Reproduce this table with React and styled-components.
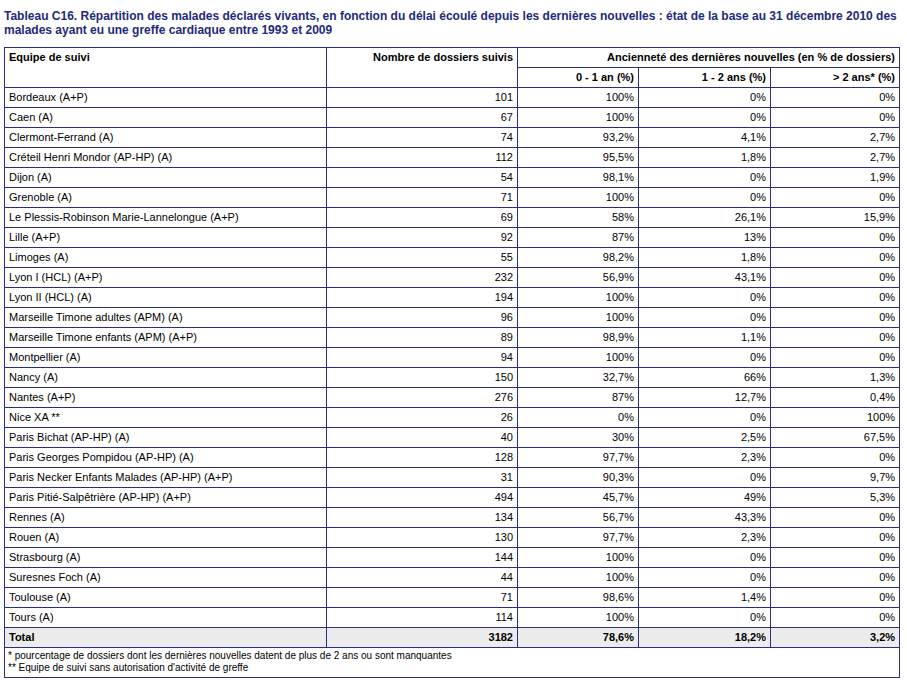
import styled, { createGlobalStyle } from "styled-components";

const rows = [
  ["Bordeaux (A+P)", "101", "100%", "0%", "0%"],
  ["Caen (A)", "67", "100%", "0%", "0%"],
  ["Clermont-Ferrand (A)", "74", "93,2%", "4,1%", "2,7%"],
  ["Créteil Henri Mondor (AP-HP) (A)", "112", "95,5%", "1,8%", "2,7%"],
  ["Dijon (A)", "54", "98,1%", "0%", "1,9%"],
  ["Grenoble (A)", "71", "100%", "0%", "0%"],
  ["Le Plessis-Robinson Marie-Lannelongue (A+P)", "69", "58%", "26,1%", "15,9%"],
  ["Lille (A+P)", "92", "87%", "13%", "0%"],
  ["Limoges (A)", "55", "98,2%", "1,8%", "0%"],
  ["Lyon I (HCL) (A+P)", "232", "56,9%", "43,1%", "0%"],
  ["Lyon II (HCL) (A)", "194", "100%", "0%", "0%"],
  ["Marseille Timone adultes (APM) (A)", "96", "100%", "0%", "0%"],
  ["Marseille Timone enfants (APM) (A+P)", "89", "98,9%", "1,1%", "0%"],
  ["Montpellier (A)", "94", "100%", "0%", "0%"],
  ["Nancy (A)", "150", "32,7%", "66%", "1,3%"],
  ["Nantes (A+P)", "276", "87%", "12,7%", "0,4%"],
  ["Nice XA **", "26", "0%", "0%", "100%"],
  ["Paris Bichat (AP-HP) (A)", "40", "30%", "2,5%", "67,5%"],
  ["Paris Georges Pompidou (AP-HP) (A)", "128", "97,7%", "2,3%", "0%"],
  ["Paris Necker Enfants Malades (AP-HP) (A+P)", "31", "90,3%", "0%", "9,7%"],
  ["Paris Pitié-Salpêtrière (AP-HP) (A+P)", "494", "45,7%", "49%", "5,3%"],
  ["Rennes (A)", "134", "56,7%", "43,3%", "0%"],
  ["Rouen (A)", "130", "97,7%", "2,3%", "0%"],
  ["Strasbourg (A)", "144", "100%", "0%", "0%"],
  ["Suresnes Foch (A)", "44", "100%", "0%", "0%"],
  ["Toulouse (A)", "71", "98,6%", "1,4%", "0%"],
  ["Tours (A)", "114", "100%", "0%", "0%"],
];

const GlobalStyle = createGlobalStyle`
  body {
    margin: 0;
    background: #fff;
    font-family: "Liberation Sans", Arial, sans-serif;
  }
`;

const Page = styled.div`
  padding: 9px 0 0 4px;
  width: 895px;
`;

const Title = styled.h1`
  margin: 0 0 10px;
  font-size: 12px;
  line-height: 14px;
  font-weight: bold;
  color: #1f2a7a;
`;

const Table = styled.table`
  border-collapse: collapse;
  width: 895px;
  table-layout: fixed;
  font-size: 11px;
  color: #000;
`;

const Cell = styled.td`
  border: 1px solid #2c2c84;
  height: 19px;
  padding: 0 4px;
  line-height: 19px;
  text-align: ${(p) => (p.$left ? "left" : "right")};
  font-weight: ${(p) => (p.$bold ? "bold" : "normal")};
  background: ${(p) => (p.$grey ? "#ececec" : "transparent")};
  vertical-align: ${(p) => (p.$top ? "top" : "middle")};
  white-space: nowrap;
`;

const Notes = styled.td`
  border: 1px solid #2c2c84;
  height: 29px;
  box-sizing: border-box;
  padding: 2px 3px 3px;
  font-size: 10px;
  line-height: 12px;
  vertical-align: top;
`;

export default function App() {
  return (
    <>
      <GlobalStyle />
      <Page>
        <Title>
          Tableau C16. Répartition des malades déclarés vivants, en fonction du délai écoulé depuis les dernières
          nouvelles : état de la base au 31 décembre 2010 des malades ayant eu une greffe cardiaque entre 1993 et 2009
        </Title>
        <Table>
          <colgroup>
            <col style={{ width: 322 }} />
            <col style={{ width: 191 }} />
            <col style={{ width: 121 }} />
            <col style={{ width: 132 }} />
            <col style={{ width: 129 }} />
          </colgroup>
          <thead>
            <tr>
              <Cell as="th" $left $bold $top rowSpan={2}>Equipe de suivi</Cell>
              <Cell as="th" $bold $top rowSpan={2}>Nombre de dossiers suivis</Cell>
              <Cell as="th" $bold colSpan={3}>Ancienneté des dernières nouvelles (en % de dossiers)</Cell>
            </tr>
            <tr>
              <Cell as="th" $bold>0 - 1 an (%)</Cell>
              <Cell as="th" $bold>1 - 2 ans (%)</Cell>
              <Cell as="th" $bold>&gt; 2 ans* (%)</Cell>
            </tr>
          </thead>
          <tbody>
            {rows.map((r) => (
              <tr key={r[0]}>
                <Cell $left>{r[0]}</Cell>
                <Cell>{r[1]}</Cell>
                <Cell>{r[2]}</Cell>
                <Cell>{r[3]}</Cell>
                <Cell>{r[4]}</Cell>
              </tr>
            ))}
            <tr>
              <Cell $left $bold $grey>Total</Cell>
              <Cell $bold $grey>3182</Cell>
              <Cell $bold $grey>78,6%</Cell>
              <Cell $bold $grey>18,2%</Cell>
              <Cell $bold $grey>3,2%</Cell>
            </tr>
            <tr>
              <Notes colSpan={5}>
                * pourcentage de dossiers dont les dernières nouvelles datent de plus de 2 ans ou sont manquantes
                <br />
                ** Equipe de suivi sans autorisation d'activité de greffe
              </Notes>
            </tr>
          </tbody>
        </Table>
      </Page>
    </>
  );
}
